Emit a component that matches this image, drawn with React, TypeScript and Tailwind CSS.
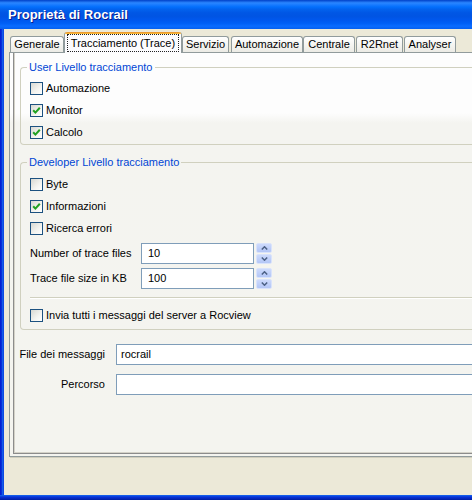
import React from "react";

function Check({ checked }: { checked?: boolean }) {
  return (
    <span className="w-[13px] h-[13px] shrink-0 border border-[#1c5180] bg-[linear-gradient(135deg,#d8d8d2,#f4f4f0_60%,#ffffff)] flex items-center justify-center">
      {checked && (
        <svg width="9" height="9" viewBox="0 0 9 9">
          <path d="M1.2 4.2 L3.4 6.6 L7.8 1.8" stroke="#21a121" strokeWidth="2" fill="none" />
        </svg>
      )}
    </span>
  );
}

function CheckRow({ label, checked }: { label: string; checked?: boolean }) {
  return (
    <div className="flex items-center h-[22px] pl-[9px] gap-[3px]">
      <Check checked={checked} />
      <span>{label}</span>
    </div>
  );
}

function Spin() {
  return (
    <div className="ml-[2px] w-[16px] h-[21px] flex flex-col gap-[1px]">
      <div className="flex-1 rounded-[2px] border border-[#d9e3fb] bg-[linear-gradient(#cddafc,#b3c6f6)] flex items-center justify-center">
        <svg width="7" height="4" viewBox="0 0 7 4">
          <path d="M0.8 3.5 L3.5 0.8 L6.2 3.5" stroke="#4d6185" strokeWidth="1.5" fill="none" />
        </svg>
      </div>
      <div className="flex-1 rounded-[2px] border border-[#d9e3fb] bg-[linear-gradient(#cddafc,#b3c6f6)] flex items-center justify-center">
        <svg width="7" height="4" viewBox="0 0 7 4">
          <path d="M0.8 0.5 L3.5 3.2 L6.2 0.5" stroke="#4d6185" strokeWidth="1.5" fill="none" />
        </svg>
      </div>
    </div>
  );
}

function NumRow({ label, value, mt }: { label: string; value: string; mt: string }) {
  return (
    <div className={`flex items-center h-[21px] pl-[9px] ${mt}`}>
      <span className="w-[111px] shrink-0">{label}</span>
      <div className="w-[113px] h-[21px] border border-[#7f9db9] bg-white flex items-center pl-[6px]">{value}</div>
      <Spin />
    </div>
  );
}

function Tab({ label, w, ml }: { label: string; w: string; ml: string }) {
  return (
    <div
      className={`${w} ${ml} h-[16px] shrink-0 border-x border-t border-[#919b9c] rounded-t-[3px] bg-[linear-gradient(#ffffff,#f3f3ef_60%,#ecebe5)] flex items-center justify-center`}
    >
      {label}
    </div>
  );
}

function Group({ title, mt, body, children }: { title: string; mt: string; body: string; children: React.ReactNode }) {
  return (
    <div className={`ml-[6px] w-[520px] flex flex-col ${mt}`}>
      <div className="flex h-[13px]">
        <div className="w-[7px] mt-[6px] border-l border-t border-[#d0d0bf] rounded-tl-[4px]" />
        <span className="px-[2px] leading-[13px] text-[#0046d5]">{title}</span>
        <div className="flex-1 mt-[6px] border-r border-t border-[#d0d0bf] rounded-tr-[4px]" />
      </div>
      <div className={`border-x border-b border-[#d0d0bf] rounded-b-[4px] ${body}`}>{children}</div>
    </div>
  );
}

export default function App() {
  return (
    <div className="w-[472px] h-[500px] overflow-hidden flex flex-col font-['Liberation_Sans',Arial,sans-serif] text-[11px] text-black">
      <div className="h-[29px] shrink-0 flex items-center pl-[8px] bg-[linear-gradient(to_bottom,#0040c8_0%,#2a86ff_10%,#1a7cff_16%,#036ffc_24%,#0262ee_32%,#0057e5_44%,#0054e3_56%,#0058ee_70%,#005ff5_80%,#0a6cff_90%,#0660f0_100%)]">
        <span className="text-white font-bold text-[13px] [text-shadow:1px_1px_0_#0a1a8c]">Proprietà di Rocrail</span>
      </div>
      <div className="flex-1 flex min-h-0">
        <div className="w-[4px] shrink-0 bg-[linear-gradient(to_right,#0019cf,#0831d9_40%,#166aee_70%,#0831d9)]" />
        <div className="flex-1 min-w-0 overflow-hidden bg-[#ece9d8] flex flex-col">
          <div className="w-[560px]">
            <div className="mt-[2px] h-[21px] flex items-end pl-[6px]">
              <Tab label="Generale" w="w-[54px]" ml="ml-0" />
              <div className="relative z-10 -mb-[1px] h-[21px] w-[118px] shrink-0 bg-[#fcfcfe] border-x border-[#919b9c] rounded-t-[3px] flex flex-col">
                <div className="h-[3px] rounded-t-[2px] bg-[linear-gradient(#e68b2c,#ffc73c)]" />
                <div className="flex-1 mx-[2px] mb-[1px] border border-dotted border-[#222] flex items-center justify-center">
                  Tracciamento (Trace)
                </div>
              </div>
              <Tab label="Servizio" w="w-[47px]" ml="ml-0" />
              <Tab label="Automazione" w="w-[72px]" ml="ml-[2px]" />
              <Tab label="Centrale" w="w-[52px]" ml="ml-0" />
              <Tab label="R2Rnet" w="w-[47px]" ml="ml-[1px]" />
              <Tab label="Analyser" w="w-[52px]" ml="ml-[1px]" />
            </div>
            <div className="ml-[5px] w-[540px] h-[405px] border border-[#919b9c] bg-[linear-gradient(to_bottom,#fdfdfd_0px,#fdfdfd_60px,#f4f4f0_70px,#f4f4ef_100%)] flex flex-col shadow-[1px_1px_0_#d0cdbd]">
              <div className="ml-[3px] mb-[2px] flex-1 border-l border-b border-[#8c8c8c] shadow-[inset_1px_-1px_0_#d4d2c8] flex flex-col">
                <Group title="User Livello tracciamento" mt="mt-[8px]" body="pt-[3px] pb-[1px]">
                  <CheckRow label="Automazione" />
                  <CheckRow label="Monitor" checked />
                  <CheckRow label="Calcolo" checked />
                </Group>
                <Group title="Developer Livello tracciamento" mt="mt-[11px]" body="pt-[4px] pb-[3px]">
                  <CheckRow label="Byte" />
                  <CheckRow label="Informazioni" checked />
                  <CheckRow label="Ricerca errori" />
                  <NumRow label="Number of trace files" value="10" mt="mt-[4px]" />
                  <NumRow label="Trace file size in KB" value="100" mt="mt-[4px]" />
                  <div className="mt-[8px] ml-[9px] border-t border-[#d0d0bf] border-b border-b-white" />
                  <div className="mt-[5px]">
                    <CheckRow label="Invia tutti i messaggi del server a Rocview" />
                  </div>
                </Group>
                <div className="mt-[14px] flex items-center h-[21px]">
                  <span className="w-[91px] shrink-0 text-right">File dei messaggi</span>
                  <div className="ml-[11px] w-[420px] h-[21px] border border-[#7f9db9] bg-white flex items-center pl-[4px]">rocrail</div>
                </div>
                <div className="mt-[9px] flex items-center h-[21px]">
                  <span className="w-[91px] shrink-0 text-right">Percorso</span>
                  <div className="ml-[11px] w-[420px] h-[21px] border border-[#7f9db9] bg-white" />
                </div>
              </div>
            </div>
          </div>
        </div>
      </div>
      <div className="h-[5px] shrink-0 bg-[linear-gradient(to_bottom,#166aee,#0831d9_40%,#001ea0)]" />
    </div>
  );
}
